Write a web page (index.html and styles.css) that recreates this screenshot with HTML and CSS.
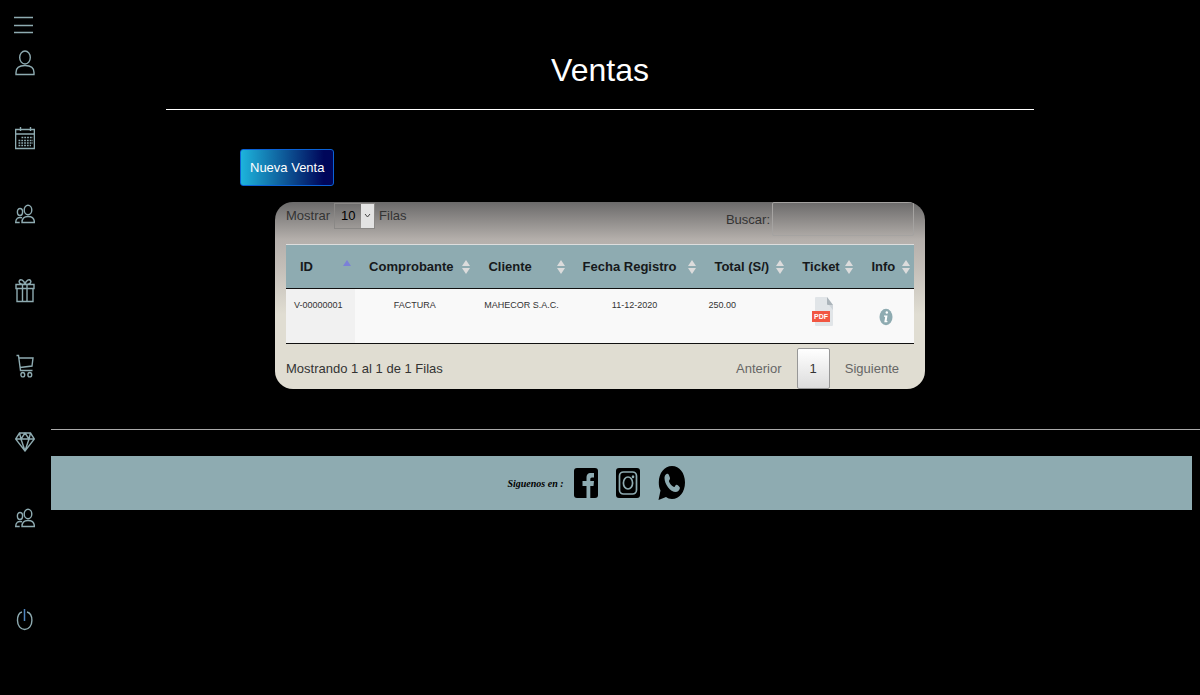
FILE: index.html
```
<!DOCTYPE html>
<html lang="es">
<head>
    <meta charset="UTF-8">
    <meta name="viewport" content="width=device-width, initial-scale=1.0">
    <title>Ventas</title>
    <link rel="stylesheet" href="styles.css">
</head>
<body>

<!-- Menu lateral -->
<nav class="sidebar">
    <button type="button" class="menu-btn" aria-label="Menu">
        <svg width="20" height="18" viewBox="0 0 20 18"><path d="M0 1.500h19M0 9.500h19M0 16.500h19"/></svg>
    </button>
    <a href="#" class="first" aria-label="Perfil">
        <svg width="20" height="26" viewBox="0 0 20 26"><ellipse cx="10" cy="7.500" rx="5.300" ry="6.500"/><path d="M1 24.500v-2c0-4 3-7 9-7s9 3 9 7v2z"/></svg>
    </a>
    <a href="#" aria-label="Calendario">
        <svg width="20" height="24" viewBox="0 0 20 24"><path d="M.6 3.500h18.800v19H.6zM.6 8h18.800M5.500 1v4M15.500 1v4"/><path class="dots" d="M6.500 11.500H18M3.500 14.500H18M3.500 17H18M3.500 19.500H16"/></svg>
    </a>
    <a href="#" aria-label="Clientes">
        <svg width="20" height="20" viewBox="0 0 20 20"><ellipse cx="13" cy="6" rx="3.800" ry="4.800"/><path d="M7 18.500c0-4 1.500-6 6-6s6.400 2 6.400 6z"/><ellipse cx="5" cy="8" rx="2.600" ry="3.500"/><path d="M7 13.800c-4-1-6.300.7-6.300 4.700h4"/></svg>
    </a>
    <a href="#" aria-label="Productos">
        <svg width="20" height="25" viewBox="0 0 20 25"><path d="M1 6.500h18v4H1zM2 10.500h16v13H2zM7.500 6.500v17M12 6.500v17M10 6.500C4 6.500 3.500 4 4.500 2.500S9 1.500 10 6.500zM10 6.500c6 0 6.500-2.500 5.500-4S11 1.500 10 6.500z"/></svg>
    </a>
    <a href="#" aria-label="Ventas">
        <svg width="20" height="24" viewBox="0 0 20 24"><path d="M1.500 1.500h2l2 15h12M4 4h14l-1 8L5 13.500"/><ellipse cx="7.800" cy="20.700" rx="1.900" ry="2.200"/><ellipse cx="14.800" cy="20.700" rx="1.900" ry="2.200"/></svg>
    </a>
    <a href="#" aria-label="Joyas">
        <svg width="20" height="20" viewBox="0 0 20 20"><path d="M4.500 1h11l3.900 6L10 19 .6 7zM.6 7h18.800M4.500 1L6 7l4-6 4 6 1.500-6M6 7l4 12 4-12"/></svg>
    </a>
    <a href="#" aria-label="Usuarios">
        <svg width="20" height="20" viewBox="0 0 20 20"><ellipse cx="13" cy="6" rx="3.800" ry="4.800"/><path d="M7 18.500c0-4 1.500-6 6-6s6.400 2 6.400 6z"/><ellipse cx="5" cy="8" rx="2.600" ry="3.500"/><path d="M7 13.800c-4-1-6.300.7-6.300 4.700h4"/></svg>
    </a>
    <a href="#" class="logout" aria-label="Salir">
        <svg width="20" height="22" viewBox="0 0 20 22"><path d="M7 3c-4 1-4.500 5-4.500 8.500 0 5 3 9 7.200 9s7.200-4 7.200-9C16.900 8 16 4 12 3"/><path class="bar" d="M9.500 0v12"/></svg>
    </a>
</nav>

<div class="page">
    <main>
        <h1>Ventas</h1>
        <hr class="title-line">

        <div class="panel">
            <button type="button" class="new-sale">Nueva Venta</button>

            <div class="card">
                <div class="table-top">
                    <div class="length">
                        <label for="rows">Mostrar</label>
                        <select id="rows">
                            <option>10</option>
                            <option>25</option>
                            <option>50</option>
                        </select>
                        <span>Filas</span>
                    </div>
                    <div class="filter">
                        <label for="search">Buscar:</label>
                        <input type="search" id="search">
                    </div>
                </div>

                <table>
                    <colgroup>
                        <col class="c-id"><col class="c-doc"><col class="c-client"><col class="c-date"><col class="c-total"><col class="c-ticket"><col class="c-info">
                    </colgroup>
                    <thead>
                        <tr>
                            <th><div>ID <svg class="sort asc" width="8" height="14" viewBox="0 0 8 14"><path d="M0 6l4-6 4 6z"/></svg></div></th>
                            <th><div>Comprobante <svg class="sort" width="8" height="14" viewBox="0 0 8 14"><path d="M0 6l4-6 4 6zM0 8l4 6 4-6z"/></svg></div></th>
                            <th><div>Cliente <svg class="sort" width="8" height="14" viewBox="0 0 8 14"><path d="M0 6l4-6 4 6zM0 8l4 6 4-6z"/></svg></div></th>
                            <th><div>Fecha Registro <svg class="sort" width="8" height="14" viewBox="0 0 8 14"><path d="M0 6l4-6 4 6zM0 8l4 6 4-6z"/></svg></div></th>
                            <th><div>Total (S/) <svg class="sort" width="8" height="14" viewBox="0 0 8 14"><path d="M0 6l4-6 4 6zM0 8l4 6 4-6z"/></svg></div></th>
                            <th><div>Ticket <svg class="sort" width="8" height="14" viewBox="0 0 8 14"><path d="M0 6l4-6 4 6zM0 8l4 6 4-6z"/></svg></div></th>
                            <th><div>Info <svg class="sort" width="8" height="14" viewBox="0 0 8 14"><path d="M0 6l4-6 4 6zM0 8l4 6 4-6z"/></svg></div></th>
                        </tr>
                    </thead>
                    <tbody>
                        <tr>
                            <td class="left sorted">V-00000001</td>
                            <td>FACTURA</td>
                            <td>MAHECOR S.A.C.</td>
                            <td>11-12-2020</td>
                            <td class="left">250.00</td>
                            <td class="icon">
                                <a href="#" aria-label="Ticket PDF">
                                    <svg width="22" height="30" viewBox="0 0 22 30">
                                        <path fill="#e1e5e8" d="M4 0h11l6 8v20q0 1-1 1H4q-1 0-1-1V1q0-1 1-1z"/>
                                        <path fill="#abb4ba" d="M15 0l6 8h-5q-1 0-1-1z"/>
                                        <path fill="#ced4d9" d="M17 8h4v5z"/>
                                        <path fill="#f15642" d="M0 14h18v11H0z"/>
                                        <text x="9" y="22" text-anchor="middle">PDF</text>
                                    </svg>
                                </a>
                            </td>
                            <td class="icon">
                                <a href="#" class="info" aria-label="Info">
                                    <svg width="14" height="18" viewBox="0 0 14 18"><ellipse cx="7" cy="9" rx="6.500" ry="8.300" fill="#8eabb1"/><ellipse cx="7.800" cy="4.500" rx="1.200" ry="1.300" fill="#fff"/><path fill="#fff" d="M5 7.500h3.500L7.600 13h1l-.4 1.300H5.300L6.200 8.700H5z"/></svg>
                                </a>
                            </td>
                        </tr>
                    </tbody>
                </table>

                <div class="table-bottom">
                    <span class="count">Mostrando 1 al 1 de 1 Filas</span>
                    <div class="pager">
                        <button type="button">Anterior</button>
                        <button type="button" class="current">1</button>
                        <button type="button">Siguiente</button>
                    </div>
                </div>
            </div>
        </div>
    </main>

    <hr class="footer-line">

    <!-- Redes sociales -->
    <footer>
        <span class="follow">Siguenos en :</span>
        <a href="#" aria-label="Facebook">
            <svg width="24" height="30" viewBox="0 0 24 30"><rect width="24" height="30" rx="3"/><path fill="#8eabb1" d="M12.500 30V18H8.500v-5h4v-3c0-4 2-5 4-5H20v4.500h-2c-1.300 0-1.700.7-1.700 2V13H20l-.5 5h-3.200v12z"/></svg>
        </a>
        <a href="#" aria-label="Instagram">
            <svg width="24" height="30" viewBox="0 0 24 30"><rect width="24" height="30" rx="3"/><g fill="none" stroke="#8eabb1" stroke-width="1.700"><rect x="3.500" y="4" width="17" height="22" rx="4"/><ellipse cx="12" cy="15" rx="4.600" ry="6"/></g><ellipse cx="17" cy="8.800" rx="1.300" ry="1.500" fill="#8eabb1"/></svg>
        </a>
        <a href="#" aria-label="WhatsApp">
            <svg width="27" height="34" viewBox="0 0 27 34"><path d="M14 0c7.500 0 13 7 13 16.500S21.500 33 14 33c-2.500 0-4.500-.7-6-2L.5 34l2-9.500C1.200 22 .8 19.500.8 16.500.8 7 6.500 0 14 0z"/><path fill="#8eabb1" d="M8.500 8c1.500-1 2.500 0 3.500 4 .3 1.500-1.500 2.500-1 3.500 1 2.500 2.500 4.500 5 5.500 1 .3 1.500-2.300 2.500-2.200 1 .2 3 1.700 3.300 2.700.5 1.500-1.500 4.500-3.800 4.500C12 26 6.500 18 6.500 12c0-1.500.5-3 2-4z"/></svg>
        </a>
    </footer>
</div>

</body>
</html>
```
FILE: styles.css
```
* {
    box-sizing: border-box;
}
body {
    margin: 0;
    display: flex;
    min-height: 100vh;
    background-color: #000;
    color: #fff;
    font-family: "Liberation Sans", Arial, sans-serif;
    font-size: 13px;
}
button, input, select {
    font: inherit;
}
svg {
    display: block;
}
hr {
    border: none;
    height: 1px;
    margin: 0;
}

/* Menu lateral */
.sidebar {
    flex: 0 0 51px;
    display: flex;
    flex-direction: column;
}
.sidebar a, .menu-btn {
    display: flex;
    justify-content: center;
    align-items: center;
    width: 50px;
    height: 76px;
    padding: 0;
    border: none;
    background: none;
}
.sidebar .menu-btn {
    height: 25px;
    margin-top: 12px;
    width: 48px;
}
.sidebar .first {
    height: 52px;
    margin-bottom: 11px;
}
.sidebar .logout {
    margin-top: 26px;
}
.sidebar svg {
    fill: none;
    stroke: #8eabb1;
    stroke-width: 1.4;
}
.sidebar .dots {
    stroke-width: 1.5;
    stroke-dasharray: 1.8 1;
}
.sidebar .bar {
    stroke: #4f86c0;
    stroke-width: 1.5;
}

.page {
    flex: 1;
    min-width: 0;
}
main {
    padding-right: 51px;
}
h1 {
    margin: 0;
    padding-top: 46px;
    font-size: 32px;
    line-height: 48px;
    font-weight: normal;
    text-align: center;
}
.title-line {
    width: 79%;
    margin: 15px auto 39px;
    background-color: #fff;
}
.panel {
    max-width: 720px;
    margin: 0 auto;
}
.new-sale {
    display: block;
    height: 37px;
    padding: 0 9px;
    border: 1px solid #0b62d6;
    border-radius: 3px;
    background: linear-gradient(to right, #1db4dc, #00065a 90%);
    color: #fff;
    cursor: pointer;
}

/* Tabla de ventas */
.card {
    margin: 16px 35px 0;
    padding: 0 11px;
    border-radius: 18px;
    overflow: hidden;
    background: linear-gradient(#6b6a6a, #b4afab 20%, #c2bdb7 34%, #e0ddd2 60%);
    color: #333;
}
.table-top {
    display: flex;
    justify-content: space-between;
    height: 42px;
}
.length, .filter {
    display: flex;
    align-items: center;
    gap: 4px;
}
.length {
    height: 27px;
}
.filter {
    height: 34px;
    gap: 2px;
}
select {
    appearance: none;
    width: 41px;
    height: 26px;
    padding: 0 0 0 6px;
    border: 1px solid #8a8886;
    color: #000;
    background: url("data:image/svg+xml,%3Csvg xmlns='http://www.w3.org/2000/svg' width='13' height='26'%3E%3Cpath fill='%23e3e3e3' d='M0 0h13v26H0z'/%3E%3Cpath fill='none' stroke='%23444' d='M4 11l2.500 3L9 11'/%3E%3C/svg%3E") right center no-repeat;
}
input {
    width: 142px;
    height: 34px;
    border: 1px solid #a5a3a1;
    border-radius: 2px;
    background: none;
}
table {
    width: 100%;
    table-layout: fixed;
    border-collapse: collapse;
    border-top: 1px solid #ddd;
    border-bottom: 1px solid #111;
}
.c-id { width: 11%; }
.c-doc { width: 19%; }
.c-client { width: 15%; }
.c-date { width: 21%; }
.c-total { width: 14%; }
.c-ticket { width: 11%; }
.c-info { width: 9%; }
th {
    height: 44px;
    padding: 0 4px 0 14px;
    border-bottom: 1px solid #111;
    background-color: #8eabb1;
    color: #16191b;
    white-space: nowrap;
}
th div {
    display: flex;
    justify-content: space-between;
    align-items: center;
}
.sort {
    fill: #dcdcdc;
}
.sort.asc {
    fill: #7b80d8;
}
td {
    height: 55px;
    padding: 8px;
    background-color: #f9f9f9;
    font-size: 9px;
    line-height: 16px;
    text-align: center;
    vertical-align: top;
    white-space: nowrap;
}
td.left {
    text-align: left;
}
td.sorted {
    background-color: #f1f1f1;
}
td a {
    display: flex;
    justify-content: center;
}
td .info {
    padding-top: 11px;
}
td text {
    fill: #fff;
    font: bold 7px "Liberation Sans", Arial, sans-serif;
}
.table-bottom {
    display: flex;
    justify-content: space-between;
    align-items: center;
    padding-top: 4px;
}
.pager {
    display: flex;
}
.pager button {
    height: 41px;
    padding: 0 14px;
    border: 1px solid transparent;
    border-radius: 2px;
    background: none;
    color: #666;
}
.pager .current {
    padding: 0 12px;
    border-color: #979797;
    background: linear-gradient(#fff, #dcdcdc);
    color: #333;
}

/* Pie de pagina */
.footer-line {
    margin: 40px 0 26px;
    background-color: #aaa;
}
footer {
    display: flex;
    justify-content: center;
    align-items: center;
    gap: 18px;
    height: 54px;
    margin-right: 8px;
    padding-right: 51px;
    background-color: #8eabb1;
}
.follow {
    margin-right: -8px;
    color: #000;
    font-family: "Liberation Serif", serif;
    font-size: 10px;
    font-style: italic;
    font-weight: bold;
}
```
